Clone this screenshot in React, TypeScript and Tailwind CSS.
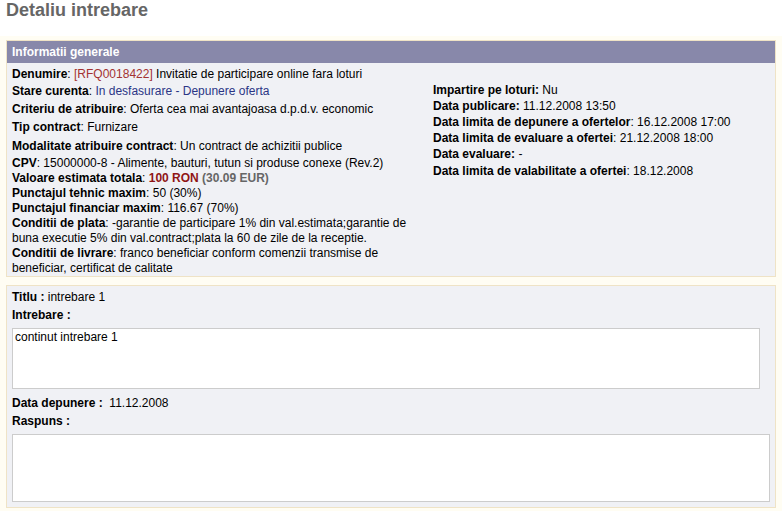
export default function App() {
  const row = 'whitespace-nowrap'
  return (
    <div className="w-[782px] h-[511px] overflow-hidden bg-white text-[12px] text-black font-['Liberation_Sans',Arial,sans-serif]">
      <h1 className="h-[36px] pl-[6px] text-[18px] leading-[20px] font-bold text-[#666666]">Detaliu intrebare</h1>
      <div className="bg-[#fffdf3] px-[6px] pt-[4px] pb-[3px]">
        {/* Informatii generale */}
        <div className="border border-[#efe3c6] bg-[#f0f1f5]">
          <div className="h-[22px] bg-[#8888aa] pl-[5px] text-white font-bold leading-[22px]">Informatii generale</div>
          <div className="flex">
            <div className="w-[426px] pl-[5px] pt-[3px]">
              <div className={`${row} h-[17px] leading-[17px]`}>
                <b>Denumire</b>: <span className="text-[#a33333]">[RFQ0018422]</span> Invitatie de participare online fara loturi
              </div>
              <div className={`${row} h-[17px] leading-[17px]`}>
                <b>Stare curenta</b>: <span className="text-[#2b3585]">In desfasurare - Depunere oferta</span>
              </div>
              <div className={`${row} h-[18px] leading-[18px]`}>
                <b>Criteriu de atribuire</b>: Oferta cea mai avantajoasa d.p.d.v. economic
              </div>
              <div className={`${row} h-[19px] leading-[19px]`}>
                <b>Tip contract</b>: Furnizare
              </div>
              <div className={`${row} h-[19px] leading-[19px]`}>
                <b>Modalitate atribuire contract</b>: Un contract de achizitii publice
              </div>
              <div className={`${row} h-[15px] leading-[15px]`}>
                <b>CPV</b>: 15000000-8 - Alimente, bauturi, tutun si produse conexe (Rev.2)
              </div>
              <div className="whitespace-nowrap leading-[15px]">
                <b>Valoare estimata totala</b>: <b className="text-[#8f1515]">100 RON</b> <b className="text-[#666666]">(30.09 EUR)</b>
                <br />
                <b>Punctajul tehnic maxim</b>: 50 (30%)
                <br />
                <b>Punctajul financiar maxim</b>: 116.67 (70%)
                <br />
                <b>Conditii de plata</b>: -garantie de participare 1% din val.estimata;garantie de
                <br />
                buna executie 5% din val.contract;plata la 60 de zile de la receptie.
                <br />
                <b>Conditii de livrare</b>: franco beneficiar conform comenzii transmise de
                <br />
                beneficiar, certificat de calitate
              </div>
            </div>
            <div className="flex-1 pt-[20px]">
              <div className={`${row} h-[15px] leading-[15px]`}><b>Impartire pe loturi:</b> Nu</div>
              <div className={`${row} h-[16px] leading-[16px]`}><b>Data publicare:</b> 11.12.2008 13:50</div>
              <div className={`${row} h-[16px] leading-[16px]`}><b>Data limita de depunere a ofertelor</b>: 16.12.2008 17:00</div>
              <div className={`${row} h-[16px] leading-[16px]`}><b>Data limita de evaluare a ofertei</b>: 21.12.2008 18:00</div>
              <div className={`${row} h-[17px] leading-[17px]`}><b>Data evaluare:</b> -</div>
              <div className={`${row} h-[17px] leading-[17px]`}><b>Data limita de valabilitate a ofertei</b>: 18.12.2008</div>
            </div>
          </div>
        </div>

        <div className="h-[8px]" />

        {/* Intrebare */}
        <div className="border border-[#efe3c6] bg-[#f0f1f5] pl-[5px] pr-[5px] pt-[2px] pb-[5px]">
          <div className="h-[18px] leading-[18px]"><b>Titlu :</b> intrebare 1</div>
          <div className="h-[18px] leading-[18px]"><b>Intrebare :</b></div>
          <div className="mt-[4px] mr-[10px] h-[61px] border border-[#cccccc] bg-white px-[2px] pt-[1px] leading-[14px]">
            continut intrebare 1
          </div>
          <div className="mt-[5px] h-[18px] leading-[18px]"><b>Data depunere :</b>&nbsp; 11.12.2008</div>
          <div className="h-[18px] leading-[18px]"><b>Raspuns :</b></div>
          <div className="mt-[4px] h-[68px] border border-[#cccccc] bg-white" />
        </div>
      </div>
    </div>
  )
}
